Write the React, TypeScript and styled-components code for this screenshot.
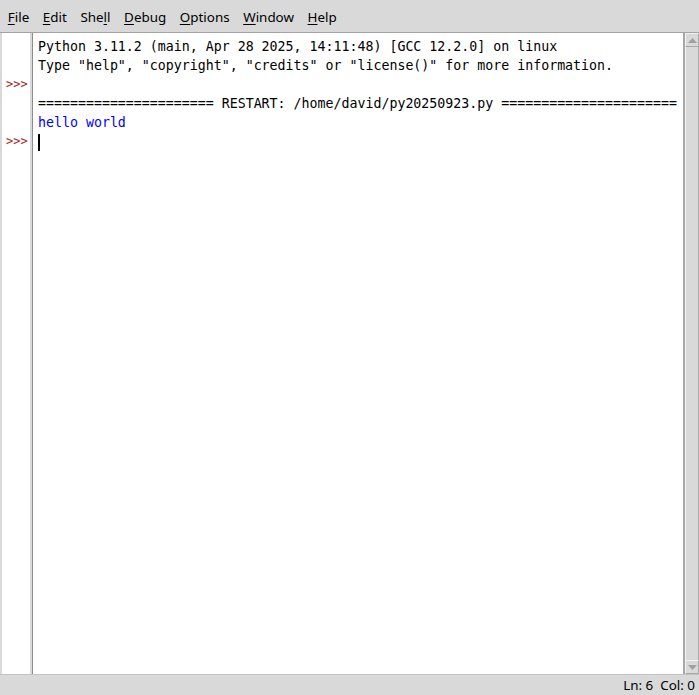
import React from "react";
import styled, { createGlobalStyle } from "styled-components";

const Global = createGlobalStyle`
  html, body { margin: 0; padding: 0; background: #d9d9d9; }
  #root { height: 695px; }
`;

const Window = styled.div`
  width: 699px;
  height: 695px;
  display: flex;
  flex-direction: column;
  background: #d9d9d9;
  overflow: hidden;
`;

const MenuBar = styled.div`
  height: 33px;
  box-sizing: border-box;
  display: flex;
  align-items: center;
  padding-left: 1px;
  border-bottom: 1px solid #a3a3a3;
  font-family: "Noto Sans", sans-serif;
  font-size: 13.4px;
  color: #000;
`;

const MenuItem = styled.span`
  padding: 0 6.8px;
  line-height: 20px;
  margin-top: 2px;
`;

const U = styled.span`
  text-decoration: underline;
  text-underline-offset: 2px;
`;

const Main = styled.div`
  flex: 1;
  display: flex;
  min-height: 0;
`;

const Gutter = styled.div`
  width: 28px;
  margin-left: 2px;
  background: #fff;
  border-right: 2px solid #d9d9d9;
  padding-top: 4px;
  font-family: "DejaVu Sans Mono", monospace;
  font-size: 12px;
  color: #a52a2a;
`;

const GutterLine = styled.div`
  height: 19px;
  line-height: 19px;
  padding-left: 4px;
  white-space: pre;
`;

const TextArea = styled.div`
  flex: 1;
  background: #fff;
  border-left: 1px solid #8c8c8c;
  border-right: 2px solid #a8a8a8;
  padding: 4px 0 0 5px;
  font-family: "DejaVu Sans Mono", monospace;
  font-size: 13.27px;
  color: #000;
`;

const Line = styled.div<{ $color?: string }>`
  height: 19px;
  line-height: 19px;
  white-space: pre;
  color: ${(p) => p.$color ?? "#000"};
`;

const Cursor = styled.span`
  display: inline-block;
  width: 1.5px;
  height: 17px;
  background: #000;
  vertical-align: middle;
`;

const ScrollBar = styled.div`
  width: 14px;
  display: flex;
  flex-direction: column;
  background: #d9d9d9;
`;

const Arrow = styled.div`
  height: 14px;
  display: flex;
  align-items: center;
  justify-content: center;
  border: 1px solid #f2f2f2;
  border-right-color: #a8a8a8;
  border-bottom-color: #a8a8a8;
  box-sizing: border-box;
`;

const Trough = styled.div`
  flex: 1;
  border-left: 1px solid #f2f2f2;
  border-right: 1px solid #a8a8a8;
`;

const StatusBar = styled.div`
  height: 21px;
  box-sizing: border-box;
  border-top: 1px solid #c4c4c4;
  display: flex;
  justify-content: flex-end;
  align-items: center;
  gap: 7px;
  padding-right: 4px;
  font-family: "Noto Sans", sans-serif;
  font-size: 13.4px;
  color: #000;
  white-space: pre;
`;

const StatusLabel = styled.span``;

const Prompt = ">>>";

export default function App() {
  return (
    <>
      <Global />
      <Window>
        <MenuBar>
          <MenuItem><U>F</U>ile</MenuItem>
          <MenuItem><U>E</U>dit</MenuItem>
          <MenuItem>She<U>l</U>l</MenuItem>
          <MenuItem><U>D</U>ebug</MenuItem>
          <MenuItem><U>O</U>ptions</MenuItem>
          <MenuItem><U>W</U>indow</MenuItem>
          <MenuItem><U>H</U>elp</MenuItem>
        </MenuBar>
        <Main>
          <Gutter>
            <GutterLine> </GutterLine>
            <GutterLine> </GutterLine>
            <GutterLine>{Prompt}</GutterLine>
            <GutterLine> </GutterLine>
            <GutterLine> </GutterLine>
            <GutterLine>{Prompt}</GutterLine>
          </Gutter>
          <TextArea>
            <Line>Python 3.11.2 (main, Apr 28 2025, 14:11:48) [GCC 12.2.0] on linux</Line>
            <Line>Type "help", "copyright", "credits" or "license()" for more information.</Line>
            <Line> </Line>
            <Line>====================== RESTART: /home/david/py20250923.py ======================</Line>
            <Line $color="#0000ff">hello world</Line>
            <Line><Cursor /></Line>
          </TextArea>
          <ScrollBar>
            <Arrow>
              <svg width="9" height="5" viewBox="0 0 9 5"><path d="M4.5 0 L9 5 L0 5 Z" fill="#a0a0a0" /></svg>
            </Arrow>
            <Trough />
            <Arrow>
              <svg width="9" height="5" viewBox="0 0 9 5"><path d="M0 0 L9 0 L4.5 5 Z" fill="#a0a0a0" /></svg>
            </Arrow>
          </ScrollBar>
        </Main>
        <StatusBar>
          <StatusLabel>Ln: 6</StatusLabel>
          <StatusLabel>Col: 0</StatusLabel>
        </StatusBar>
      </Window>
    </>
  );
}
